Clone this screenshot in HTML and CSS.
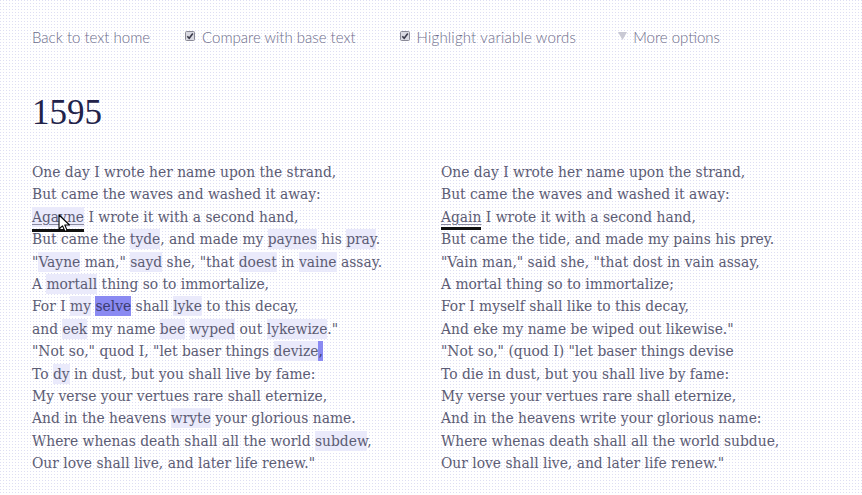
FILE: index.html
```html
<!DOCTYPE html>
<html>
<head>
<meta charset="utf-8">
<link rel="stylesheet" href="styles.css">
</head>
<body>
<div class="page">
  <nav class="nav">
    <a class="nav-link" href="#">Back to text home</a>
    <label class="nav-item"><span class="check"><svg width="10" height="10" viewBox="0 0 10 10"><rect x="0.5" y="0.5" width="9" height="9" rx="1" fill="#d9d9e2" stroke="#8a8a96"/><path d="M2.3 5.2 L4.2 7.2 L7.8 2.6" fill="none" stroke="#3a3a4a" stroke-width="1.6"/></svg></span>Compare with base text</label>
    <label class="nav-item wide"><span class="check"><svg width="10" height="10" viewBox="0 0 10 10"><rect x="0.5" y="0.5" width="9" height="9" rx="1" fill="#d9d9e2" stroke="#8a8a96"/><path d="M2.3 5.2 L4.2 7.2 L7.8 2.6" fill="none" stroke="#3a3a4a" stroke-width="1.6"/></svg></span>Highlight variable words</label>
    <span class="nav-item more"><svg class="tri" width="9" height="8" viewBox="0 0 9 8"><path d="M0 0 H9 L4.5 8 Z" fill="#c9c9d4"/></svg>More options</span>
  </nav>
  <h1 class="title">1595</h1>
  <div class="columns">
    <div class="poem">
      <div class="line">One day I wrote her name upon the strand,</div>
      <div class="line">But came the waves and washed it away:</div>
      <div class="line"><span class="under v">Agayne</span> I wrote it with a second hand,</div>
      <div class="line">But came the <span class="v">tyde</span>, and made my <span class="v">paynes</span> his <span class="v">pray</span>.</div>
      <div class="line">"<span class="v">Vayne</span> man," <span class="v">sayd</span> she, "that <span class="v">doest</span> in <span class="v">vaine</span> assay.</div>
      <div class="line">A <span class="v">mortall</span> thing so to immortalize,</div>
      <div class="line">For I <span class="v">my</span> <span class="sel">selve</span> shall <span class="v">lyke</span> to this decay,</div>
      <div class="line">and <span class="v">eek</span> my name <span class="v">bee</span> <span class="v">wyped</span> out <span class="v">lykewize</span>."</div>
      <div class="line">"Not so," quod I, "let baser things <span class="v">devize</span><span class="sel">,</span></div>
      <div class="line">To <span class="v">dy</span> in dust, but you shall live by fame:</div>
      <div class="line">My verse your vertues rare shall eternize,</div>
      <div class="line">And in the heavens <span class="v">wryte</span> your glorious name.</div>
      <div class="line">Where whenas death shall all the world <span class="v">subdew</span>,</div>
      <div class="line">Our love shall live, and later life renew."</div>
      <svg class="cursor" width="13" height="20" viewBox="0 0 13 20"><path d="M1 1 L1 15 L4.5 11.8 L7 17.5 L9.2 16.5 L6.8 11 L11.5 11 Z" fill="#fff" stroke="#000" stroke-width="1.1" stroke-linejoin="round"/></svg>
    </div>
    <div class="poem">
      <div class="line">One day I wrote her name upon the strand,</div>
      <div class="line">But came the waves and washed it away:</div>
      <div class="line"><span class="under">Again</span> I wrote it with a second hand,</div>
      <div class="line">But came the tide, and made my pains his prey.</div>
      <div class="line">"Vain man," said she, "that dost in vain assay,</div>
      <div class="line">A mortal thing so to immortalize;</div>
      <div class="line">For I myself shall like to this decay,</div>
      <div class="line">And eke my name be wiped out likewise."</div>
      <div class="line">"Not so," (quod I) "let baser things devise</div>
      <div class="line">To die in dust, but you shall live by fame:</div>
      <div class="line">My verse your vertues rare shall eternize,</div>
      <div class="line">And in the heavens write your glorious name:</div>
      <div class="line">Where whenas death shall all the world subdue,</div>
      <div class="line">Our love shall live, and later life renew."</div>
    </div>
  </div>
</div>
</body>
</html>
```

FILE: styles.css
```css
html, body {
  margin: 0;
  padding: 0;
}
body {
  background-color: #ffffff;
  background-image: conic-gradient(at 1px 1px, transparent 75%, #dedef3 0);
  background-size: 3px 3px;
  width: 862px;
  height: 495px;
  overflow: hidden;
}
.page {
  padding: 28px 0 0 32px;
  position: relative;
}
.nav {
  display: flex;
  align-items: center;
  height: 18px;
  font-family: Lato, "Open Sans", sans-serif;
  font-weight: 300;
  font-size: 15px;
  color: #6c6c8a;
}
.nav-link {
  color: #6c6c8a;
  text-decoration: none;
  margin-right: 35px;
}
.nav-item {
  display: flex;
  align-items: center;
  margin-right: 44px;
}
.nav-item.wide {
  letter-spacing: 0.2px;
  margin-right: 42px;
}
.check {
  display: inline-flex;
  margin-right: 7px;
  margin-top: -3px;
}
.tri {
  margin-right: 6px;
  margin-top: -2px;
}
.title {
  margin: 47px 0 0 0;
  font-family: "Liberation Serif", "Times New Roman", serif;
  font-weight: 400;
  font-size: 35px;
  line-height: 40px;
  color: #22224a;
}
.columns {
  display: flex;
  margin-top: 28px;
}
.poem {
  width: 409px;
  font-family: "DejaVu Serif", serif;
  font-size: 13.85px;
  line-height: 22.4px;
  color: #5c5c74;
  position: relative;
}
.line {
  white-space: nowrap;
}
.v {
  background: #eaeafb;
  padding: 2px 0;
}
.sel {
  background: #8a8af2;
  color: #3c3c70;
  padding: 2px 0;
}
.under {
  text-decoration: underline;
  text-decoration-color: #8a8aa0;
  text-decoration-thickness: 1px;
  text-underline-offset: 2px;
  position: relative;
}
.under::after {
  content: "";
  position: absolute;
  left: 0;
  right: 0;
  bottom: -5px;
  height: 3px;
  background: #111111;
}
.cursor {
  position: absolute;
  left: 26px;
  top: 53px;
}
```
